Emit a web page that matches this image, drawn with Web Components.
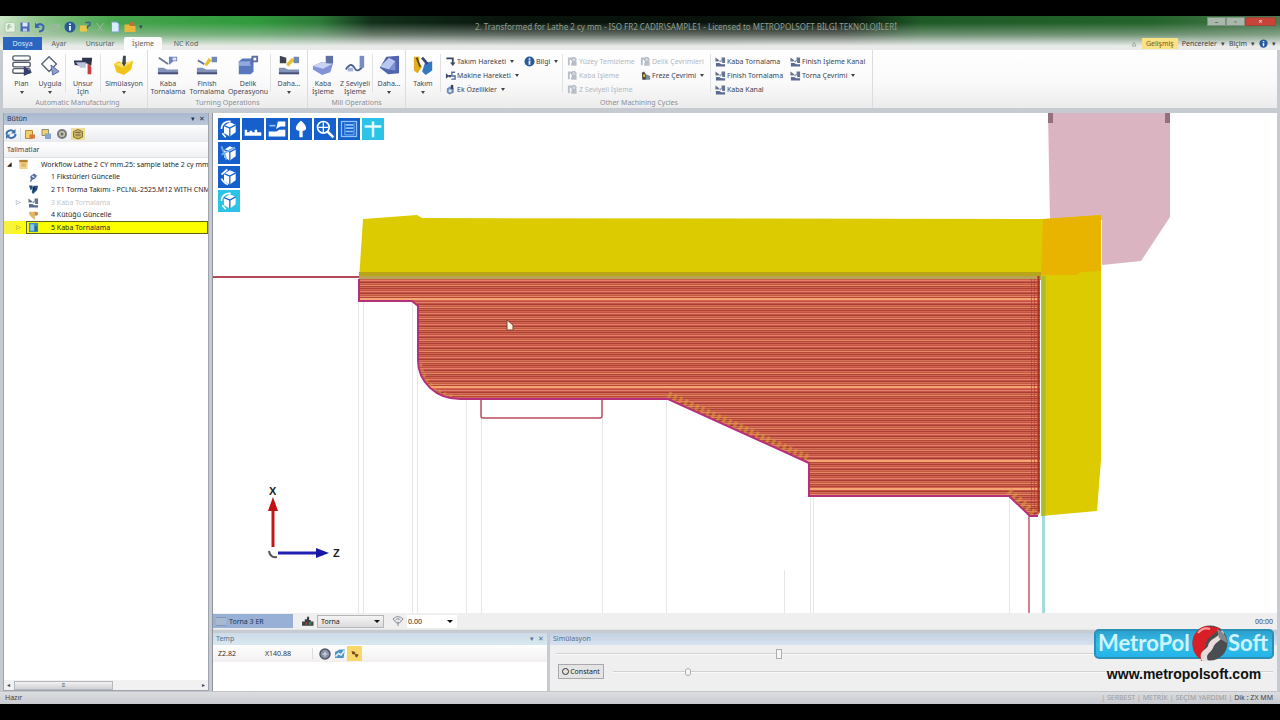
<!DOCTYPE html>
<html lang="tr">
<head>
<meta charset="utf-8">
<title>CAM - Torna</title>
<style>
html, body { height: 100%; margin: 0; background: #000; }
body { font: 7px/9px "Noto Sans", "Liberation Sans", sans-serif; color: #3c4450; }
</style>
</head>
<body>
<cam-app></cam-app>
<script>
const BASE = `:host{box-sizing:border-box} *{box-sizing:border-box} button{font:inherit;color:inherit;background:none;border:0;padding:0;margin:0;white-space:nowrap} `;
function define(name, css, html, setup) {
  const t = document.createElement('template');
  t.innerHTML = `<style>${BASE}${css}</style>${html}`;
  customElements.define(name, class extends HTMLElement {
    connectedCallback() {
      if (this.shadowRoot) return;
      const root = this.attachShadow({ mode: 'open' });
      root.append(t.content.cloneNode(true));
      if (setup) setup(this, root);
    }
  });
}

/* ---------- icons, all on a 24 x 24 grid ---------- */
const cube = '<path d="M6 8l7-4 7 3v9l-7 5-7-4z" fill="#fff"/><path d="M6 8l7 3 7-4M13 11v10" stroke="#1464c8" stroke-width="1.5" fill="none"/>';
const lathe = (top) => `<path d="M1 22v-7h6l4 2h12v5z" fill="#8292b8"/><path d="M1 20h22v2H1z" fill="#454f78"/>${top}`;
const holder = '<path d="M13 12V3h9v5h-4z" fill="#6f84bd"/><path d="M17 4h4v3h-4z" fill="#dfe5f4"/>';
const ICONS = {
  app: '<rect x="2" y="3" width="20" height="19" rx="3" fill="#e8f2e4" stroke="#8ab08a"/><path d="M8 17V8h5M8 12h7" stroke="#8ab08a" stroke-width="2" fill="none"/>',
  save: '<path d="M3 3h18v18H3z" fill="#4a6cb8"/><path d="M7 3h10v8H7z" fill="#dfe8f8"/><path d="M8 15h8v6H8z" fill="#c0cce6"/>',
  undo: '<path d="M5 10c6-7 15-3 14 4-1 5-5 7-9 7" stroke="#3d64b4" stroke-width="4" fill="none"/><path d="M2 3v11h10z" fill="#3d64b4"/>',
  redo: '<path d="M19 10C13 3 4 7 5 14c1 5 5 7 9 7" stroke="#9db4a8" stroke-width="3" fill="none"/><path d="M22 3v11H12z" fill="#9db4a8"/>',
  info: '<circle cx="12" cy="12" r="11" fill="#2a5a9c"/><path d="M10 10h4v9h-4zM10 5h4v3h-4z" fill="#e4f0ff"/>',
  help2: '<path d="M2 9h14v12H2z" fill="#eac64a"/><path d="M13 3h9v5l-5 3v4" stroke="#40618c" stroke-width="3" fill="none"/>',
  cut: '<path d="M5 4l12 16M19 4L7 20" stroke="#9eb3a6" stroke-width="2"/>',
  doc: '<path d="M5 2h11l4 4v16H5z" fill="#d8ecfc" stroke="#6e9dd0" stroke-width="2"/>',
  folder: '<path d="M1 7h9l2 3h11v12H1z" fill="#e8b83c"/><path d="M12 2h9v8h-9z" fill="#b97336"/>',
  plan: '<rect x="2" y="2" width="19" height="5" rx="2" fill="#fff" stroke="#59606c" stroke-width="1.5"/><rect x="2" y="9" width="19" height="5" rx="2" fill="#fff" stroke="#59606c" stroke-width="1.5"/><rect x="2" y="16" width="19" height="5" rx="2" fill="#fff" stroke="#59606c" stroke-width="1.5"/><path d="M14 13l9 7-9 4z" fill="#35416d"/>',
  apply: '<path d="M3 11l8-8 8 8-8 8z" fill="#fff" stroke="#596374" stroke-width="1.500"/><path d="M13 12l9 7-7 4z" fill="#8fa3cf" stroke="#52659a"/>',
  feature: '<path d="M2 7h9V4h11l-1 9-5-3-5 3-8-1z" fill="#2c344e"/><path d="M4 9l5 6h6V9z" fill="#bbc4de"/><path d="M17 10l4 4v8h-4z" fill="#cc3a42"/>',
  sim: '<path d="M1 11l5-3 7 3 9-4-2 10-8 6-8-3z" fill="#f0c419"/><path d="M1 11l10 4 11-7-10 1z" fill="#fae06b"/><path d="M11 2h3v8l-2 4-2-4z" fill="#404654"/>',
  rough: lathe('<path d="M2 4l10 7" stroke="#6b789c" stroke-width="2"/>' + holder),
  finish: lathe('<path d="M2 7l7 4" stroke="#6b789c" stroke-width="2"/><path d="M9 12l5-8 3 3-5 6z" fill="#e5c230"/><path d="M17 3h6v6h-6z" fill="#7387b8"/>'),
  drill: '<path d="M2 8l4-3h12v14l-3 3H2z" fill="#5777bf"/><path d="M2 8h13v5H2z" fill="#91a9df"/><path d="M15 8l3-3" stroke="#fff"/><path d="M16 2h7v7h-5l-4 3z" fill="#5d6ea3"/><path d="M18 4h3v3h-3z" fill="#fff"/>',
  more: lathe('<path d="M2 2l7 2v6H2z" fill="#3d4350"/><path d="M9 11l6-7 3 3-7 7z" fill="#e5c230"/><path d="M17 3h6v7h-6z" fill="#7387b8"/>'),
  mill: '<path d="M1 13l9-4 13 1-3 10-9 3-10-6z" fill="#8292d8"/><path d="M1 13l9-4 12 2-10 5z" fill="#cad3f5"/><path d="M15 2h8v8h-8z" fill="#5f719f"/>',
  mill2: '<path d="M2 17c5-8 8-5 10-1s7 1 9-4" stroke="#4e6392" stroke-width="2" fill="none"/><path d="M17 2h5v13h-5z" fill="#788cc0"/><path d="M4 15h6v4H4z" fill="#a5b5d9"/>',
  ball: '<path d="M9 3l14-1v19l-12 1-9-7z" fill="#5264ae"/><path d="M2 14L12 4l7 4-7 9z" fill="#b8c7f0"/><path d="M12 17l7-9v10z" fill="#7d92d4"/>',
  tool: '<path d="M2 3h6v7l3 4-5 7-4-3z" fill="#e3ad1e"/><path d="M5 4l4 10" stroke="#5d4a1c" stroke-width="2"/><path d="M14 10l8-2v10l-7 5-4-4z" fill="#3279c2"/><path d="M11 4l6 7" stroke="#384a72" stroke-width="3"/>',
  move: '<path d="M3 5h14v12" stroke="#3f4a61" stroke-width="4" fill="none"/><path d="M11 14h12l-6 8z" fill="#3f4a61"/>',
  machine: '<path d="M2 7l7 6-7 6zM8 11h5v5H8z" fill="#3a4968"/><path d="M22 5h-7v8h7v7h-8" stroke="#52679a" stroke-width="3" fill="none"/>',
  extra: '<path d="M4 10l8-5 7 4v10l-9 4-6-4z" fill="#718cb8"/><path d="M13 2h5v9h-5z" fill="#35445f"/><path d="M8 12h6v6H8z" fill="#dbe6f6"/>',
  ghost: '<path d="M2 3h9v5H6v12H2zM12 12h9v9H9v-5z" fill="#b9bfc9"/><circle cx="15" cy="8" r="5" fill="#d0d4dc" stroke="#a9b0bd" stroke-width="2"/>',
  cycle: '<path d="M4 6l5-3 4 7v11H5z" fill="#51493c"/><path d="M13 9l9 4v8h-9z" fill="#7a8ba6"/><path d="M7 9l4 1v5H7z" fill="#e0c240"/>',
  turn: '<path d="M1 3l9 7-3 2H1zM14 3h8v12h-6z" fill="#67728c"/><path d="M2 15h7l5 3h8v5H2z" fill="#5b6a92"/><path d="M10 13l6-5" stroke="#8a98ba" stroke-width="3"/>',
  refresh: '<path d="M3 13C3 5 12 2 18 7M21 12c0 7-9 11-15 5" stroke="#3f6fae" stroke-width="4" fill="none"/><path d="M21 2v9h-9zM2 22v-9h9z" fill="#3f6fae"/>',
  note: '<path d="M3 5h14v16H3z" fill="#f1cf6a" stroke="#b18c38" stroke-width="2"/><path d="M11 13h11v8H11z" fill="#d8793c"/>',
  sheet: '<path d="M4 3h13v12H4z" fill="#f1cf6a" stroke="#8b8f74" stroke-width="2"/><path d="M10 11h12v11H10z" fill="#87a3d2"/>',
  gear: '<circle cx="12" cy="12" r="8" fill="#d0c79d" stroke="#737987" stroke-width="4"/><circle cx="12" cy="12" r="3" fill="#646b7c"/>',
  chart: '<path d="M3 7l9-4 9 4v11l-9 4-9-4z" fill="#cbb25c" stroke="#857136" stroke-width="2"/><path d="M7 9h10M7 14h10" stroke="#6c6450" stroke-width="2"/>',
  flow: '<path d="M3 2h18v20H3z" fill="#f2d58c"/><path d="M3 2h18v5H3z" fill="#b07f2f"/><path d="M7 11h10M7 15h10" stroke="#d09b46" stroke-width="2"/>',
  pin: '<path d="M5 9l8-6 7 5-6 8-8 1z" fill="#566d98"/><path d="M9 9l5 3" stroke="#dce8fa" stroke-width="3"/><path d="M5 21l5-7" stroke="#566d98" stroke-width="3"/>',
  toolhead: '<path d="M2 3h8v6L6 14zM12 4h10l-2 9-9 9-3-4z" fill="#224e86"/><path d="M10 6l6 4-5 6z" fill="#0d2646"/>',
  stock: '<path d="M2 4h20v7l-7 2v9l-6-5-6-6z" fill="#e0b76a"/><path d="M14 3l8 5-5 5z" fill="#c07a40"/>',
  active: '<path d="M2 2h20v20H2z" fill="#3f8fbe"/><path d="M5 5h8v14H5z" fill="#93c9e4"/><path d="M15 9h5v11h-5z" fill="#2a6694"/>',
  chuck: '<path d="M2 20v-8h5V8h4V3h4v6h3v3h5v8z" fill="#3c4044"/><path d="M8 13h4v5H8z" fill="#a03c30"/><path d="M15 13h4v5h-4z" fill="#3e8f50"/>',
  wifi: '<path d="M2 8c6-6 14-6 20 0l-7 8h-6z" fill="none" stroke="#858b94" stroke-width="2"/><path d="M7 10c3-3 7-3 10 0M12 13v9" fill="none" stroke="#858b94" stroke-width="2"/>',
  target: '<circle cx="12" cy="12" r="10" fill="#8a91a6" stroke="#4e5568" stroke-width="3"/><path d="M7 12h10M12 7v10" stroke="#dde2ee" stroke-width="2"/>',
  axes: '<path d="M2 8l9-5h11l-3 17H2z" fill="#4d94c3"/><path d="M3 17l6-6 5 3 7-9" stroke="#e8f6ff" stroke-width="3" fill="none"/>',
  snap: '<path d="M4 5l9 2-2 7-6-2zM13 11l8 3-5 7-4-4z" fill="#7a4a20"/>',
  v1: cube + '<path d="M3 12c0-7 6-10 11-9M4 17l4 5" stroke="#fff" stroke-width="2" fill="none"/>',
  v2: '<path d="M2 20v-7h3v3h3v-2h3v2h3v-3h3v3h5v4z" fill="#fff"/>',
  v3: '<path d="M2 21v-6h9l4-2h7v8z" fill="#fff"/><path d="M13 3h9v6h-6l-5 3z" fill="#fff"/><path d="M3 8h7" stroke="#9cc6ff" stroke-width="2"/>',
  v4: '<path d="M12 2c3 2 7 7 6 10-1 2-3 2-4 2v8h-4v-8c-1 0-3 0-4-2-1-3 3-8 6-10z" fill="#fff"/>',
  v5: '<circle cx="10" cy="10" r="7" fill="none" stroke="#fff" stroke-width="2"/><path d="M15 15l7 7" stroke="#fff" stroke-width="3"/><path d="M10 4v12M4 10h12" stroke="#fff" stroke-width="1.5"/>',
  v6: '<rect x="3" y="3" width="18" height="18" fill="none" stroke="#8fc4ff" stroke-width="1.5"/><path d="M8 7h9M8 11h9M8 15h9" stroke="#8fc4ff" stroke-width="2"/><path d="M7 5v14h11V5" stroke="#8fc4ff" fill="none"/>',
  v7: '<path d="M12 3v19M2 9h20" stroke="#e4fbff" stroke-width="3"/>',
  v8: cube + '<path d="M3 4l6 16M3 14l16-9" stroke="#78acf0" stroke-width="2"/>',
  v9: cube + '<path d="M3 9l7-6M3 14c2 4 4 6 8 7" stroke="#fff" stroke-width="2" fill="none"/>',
  dot: '<path d="M6 18l6-11 6 11z" fill="none" stroke="#889888" stroke-width="2"/>'
};
customElements.define('ui-icon', class extends HTMLElement {
  connectedCallback() {
    if (this.shadowRoot) return;
    const s = this.getAttribute('size') || 12;
    this.attachShadow({ mode: 'open' }).innerHTML =
      `<style>:host{display:inline-flex;flex:none;vertical-align:middle}svg{display:block}</style>
       <svg width="${s}" height="${s}" viewBox="0 0 24 24" aria-hidden="true">${ICONS[this.getAttribute('name')] || ''}</svg>`;
  }
});

/* ---------- title and tabs ---------- */
define('title-bar', `
:host{display:flex;align-items:center;height:21px;padding:0 4px}
nav{display:flex;gap:3px;align-items:center}
h1{flex:1;margin:0;padding-left:332px;font-weight:400;font-size:8px;line-height:10px;color:#8f9f90;white-space:nowrap;overflow:hidden}
.win{display:flex;align-self:flex-start;margin-top:1px}
.win button{width:19px;height:9px;background:#a9b8aa;color:#3c463e;line-height:8px;border:1px solid #7f9182}
.win .x{width:31px;background:#c84438;color:#fff;border-color:#9c463c}`, `
<nav aria-label="Hızlı erişim">
<button aria-label="Uygulama"><ui-icon name="app"></ui-icon></button><button aria-label="Kaydet"><ui-icon name="save"></ui-icon></button>
<button aria-label="Geri al"><ui-icon name="undo"></ui-icon></button><button aria-label="Yinele"><ui-icon name="redo"></ui-icon></button>
<button aria-label="Bilgi"><ui-icon name="info"></ui-icon></button><button aria-label="Yardım"><ui-icon name="help2"></ui-icon></button>
<button aria-label="Kes"><ui-icon name="cut"></ui-icon></button><button aria-label="Yeni"><ui-icon name="doc"></ui-icon></button>
<button aria-label="Aç"><ui-icon name="folder"></ui-icon></button><span>▾</span></nav>
<h1>2. Transformed for Lathe 2 cy mm - ISO FR2 CADIR\\SAMPLE1 - Licensed to METROPOLSOFT BİLGİ TEKNOLOJİLERİ</h1>
<div class="win"><button aria-label="Küçült">–</button><button aria-label="Büyüt">▫</button><button class="x" aria-label="Kapat">×</button></div>`);

define('tab-bar', `
:host{display:flex;align-items:stretch;height:13px;padding:0 4px 0 3px}
button{display:flex;align-items:center;justify-content:center;width:42px;color:#5b625e}
.file{background:#2a66c0;color:#dbe8ff;width:39px}
.a{width:34px}.w{width:48px}.on{background:#fafbfa;width:38px;border-radius:2px 2px 0 0}
.r{display:flex;align-items:center;gap:4px;margin-left:auto}
.r button{width:auto;color:#444}
.r .hi{background:#fae184;height:11px;width:36px;color:#6d5a20}
.r .g{gap:4px}`, `
<button class="file">Dosya</button><button class="a">Ayar</button><button class="w">Unsurlar</button><button class="on">İşleme</button><button class="w">NC Kod</button>
<div class="r"><ui-icon name="dot" size="8"></ui-icon><button class="hi">Gelişmiş</button><button class="g">Pencereler <span>▾</span></button><button class="g">Biçim <span>▾</span></button><button class="g" aria-label="Yardım"><ui-icon name="info" size="9"></ui-icon><span>▾</span></button></div>`);

/* ---------- ribbon ---------- */
define('ribbon-group', `
:host{display:flex;flex-direction:column;border-right:1px solid #d9dce0;padding-top:4px}
.b{display:flex;flex:1}
.c{text-align:center;color:#8a8f98;height:11px;line-height:11px;font-size:7px}`,
`<div class="b"><slot></slot></div><div class="c"></div>`,
(h, r) => r.querySelector('.c').textContent = h.getAttribute('caption'));

define('big-button', `
:host{display:block;flex:none}
button{display:flex;flex-direction:column;align-items:center;width:100%;height:42px;line-height:8px;color:#444c58}
.l{white-space:pre;margin-top:4px;text-align:center}
.ic{display:flex}
i{width:0;height:0;border:2px solid transparent;border-top:3px solid #444;margin-top:3px}`,
`<button><span class="ic"></span><span class="l"></span></button>`,
(h, r) => {
  h.style.width = h.getAttribute('w') + 'px';
  r.querySelector('.ic').innerHTML = `<ui-icon size="22" name="${h.getAttribute('icon')}"></ui-icon>`;
  r.querySelector('.l').textContent = h.getAttribute('label').replace('|', '\n');
  if (h.hasAttribute('menu')) r.querySelector('button').append(document.createElement('i'));
});

define('small-button', `
:host{display:block}
button{display:flex;align-items:center;gap:1px;height:14px;color:#3c4450}
:host([off]) button{color:#b4b8bf}
i{width:0;height:0;border:2px solid transparent;border-top:3px solid #444;margin:2px 0 0 3px}`,
`<button><slot name="icon"></slot><span></span></button>`,
(h, r) => {
  h.insertAdjacentHTML('beforeend', `<ui-icon slot="icon" size="11" name="${h.getAttribute('icon')}"></ui-icon>`);
  r.querySelector('span').textContent = h.getAttribute('label');
  if (h.hasAttribute('menu')) r.querySelector('button').append(document.createElement('i'));
});

define('ribbon-bar', `
:host{display:flex;height:58px;padding-left:5px;margin:0 3px;background:linear-gradient(#fff,#fafafb 55%,#ececee)}
hr{width:1px;height:38px;border:0;margin:0;background:#dfe1e5;flex:none}
.s{margin-right:4px}
.col{display:flex;flex-direction:column}
.k1{width:79px}.k2{width:38px}.k3{width:73px}.k4{width:70px}.k5{width:75px}.k6{width:82px}`, `
<ribbon-group caption="Automatic Manufacturing">
<big-button w="27" icon="plan" label="Plan" menu></big-button><big-button w="30" icon="apply" label="Uygula" menu></big-button><hr>
<big-button w="34" icon="feature" label="Unsur|İçin"></big-button><hr><big-button w="46" icon="sim" label="Simülasyon" menu></big-button></ribbon-group>
<ribbon-group caption="Turning Operations">
<big-button w="40" icon="rough" label="Kaba|Tornalama"></big-button><big-button w="38" icon="finish" label="Finish|Tornalama"></big-button><big-button w="44" icon="drill" label="Delik|Operasyonu"></big-button><hr>
<big-button w="36" icon="more" label="Daha..." menu></big-button></ribbon-group>
<ribbon-group caption="Mill Operations">
<big-button w="30" icon="mill" label="Kaba|İşleme"></big-button><big-button w="34" icon="mill2" label="Z Seviyeli|İşleme"></big-button><hr>
<big-button w="32" icon="ball" label="Daha..." menu></big-button></ribbon-group>
<ribbon-group caption="Other Machining Cycles">
<big-button w="34" icon="tool" label="Takım" menu></big-button><hr class="s">
<div class="col k1"><small-button icon="move" label="Takım Hareketi" menu></small-button><small-button icon="machine" label="Makine Hareketi" menu></small-button><small-button icon="extra" label="Ek Özellikler" menu></small-button></div>
<div class="col k2"><small-button icon="info" label="Bilgi" menu></small-button></div><hr class="s">
<div class="col k3"><small-button off icon="ghost" label="Yüzey Temizleme"></small-button><small-button off icon="ghost" label="Kaba İşleme"></small-button><small-button off icon="ghost" label="Z Seviyeli İşleme"></small-button></div>
<div class="col k4"><small-button off icon="ghost" label="Delik Çevrimleri"></small-button><small-button icon="cycle" label="Freze Çevrimi" menu></small-button></div><hr class="s">
<div class="col k5"><small-button icon="turn" label="Kaba Tornalama"></small-button><small-button icon="turn" label="Finish Tornalama"></small-button><small-button icon="turn" label="Kaba Kanal"></small-button></div>
<div class="col k6"><small-button icon="turn" label="Finish İşleme Kanal"></small-button><small-button icon="turn" label="Torna Çevrimi" menu></small-button></div></ribbon-group>`);

/* ---------- left panel ---------- */
define('tree-item', `
:host{display:flex;align-items:center;overflow:hidden;white-space:nowrap;color:#24282e;min-height:0}
.t{width:22px;flex:none;color:#777;padding-left:12px;font-size:6px}
.m{display:flex;flex:1;align-items:center;gap:12px;min-width:0;height:100%;padding-left:1px;border:1px solid transparent}
:host([root]) .t{width:12px;padding-left:3px;color:#222}
:host([off]){color:#c4c7cc}
:host([on]){background:linear-gradient(90deg,#f6f04a,#ff0 25px)}
:host([on]) .m{border-color:#5f661c;background:#fbff00}`,
`<span class="t"></span><div class="m"><slot name="icon"></slot><span class="l"></span></div>`,
(h, r) => {
  h.insertAdjacentHTML('beforeend', `<ui-icon slot="icon" size="11" name="${h.getAttribute('icon')}"></ui-icon>`);
  r.querySelector('.l').textContent = h.getAttribute('label');
  r.querySelector('.t').textContent = h.getAttribute('mark') || '';
});
define('side-panel', `
:host{display:flex;flex-direction:column;width:206px;flex:none;background:#fff;border:1px solid #9ea4ae;border-top:0}
header{display:flex;justify-content:space-between;height:12px;line-height:12px;padding:0 3px;background:linear-gradient(#aab9d0,#b9c6da);color:#26344c}
.tb{display:flex;gap:3px;align-items:center;height:17px;background:linear-gradient(#fdfdfe,#e9ebef)}
.tb button{display:flex;padding:0 1px}
.tb .on{background:#ecdf9c}
.tb hr{width:1px;height:12px;margin:0;border:0;background:#d4d7dc}
.tb{gap:2px}
h2{margin:0;font-weight:400;font-size:7px;line-height:14px;padding:1px 3px 0;background:linear-gradient(#fff,#f0f1f4);border-bottom:1px solid #dde0e4}
.tree{display:grid;grid-template-rows:repeat(6,1fr);height:76px}
.sb{display:flex;align-items:center;height:10px;margin-top:auto;background:#f1f1f2;justify-content:space-between;padding:0 3px;font-size:6px}
.thumb{width:99px;height:9px;margin-right:auto;margin-left:4px;border:1px solid #b4b7bc;background:linear-gradient(#f2f2f3,#cfd0d3);text-align:center;line-height:7px}`, `
<header><span>Bütün</span><span>▾ &nbsp;✕</span></header>
<div class="tb"><button aria-label="Yenile"><ui-icon name="refresh"></ui-icon></button><hr><button aria-label="Not"><ui-icon name="note"></ui-icon></button><button aria-label="Sayfa"><ui-icon name="sheet"></ui-icon></button><button aria-label="Ayar"><ui-icon name="gear"></ui-icon></button><button class="on" aria-label="Grafik"><ui-icon name="chart"></ui-icon></button></div>
<h2>Talimatlar</h2>
<div class="tree">
<tree-item root mark="◢" icon="flow" label="Workflow Lathe 2 CY mm.25: sample lathe 2 cy mm"></tree-item>
<tree-item icon="pin" label="1 Fikstürleri Güncelle"></tree-item>
<tree-item icon="toolhead" label="2 T1 Torma Takımı - PCLNL-2525.M12 WITH CNM"></tree-item>
<tree-item off mark="▷" icon="turn" label="3 Kaba Tornalama"></tree-item>
<tree-item icon="stock" label="4 Kütüğü Güncelle"></tree-item>
<tree-item on mark="▷" icon="active" label="5 Kaba Tornalama"></tree-item></div>
<div class="sb"><span>◂</span><div class="thumb">≡</div><span>▸</span></div>`);

/* ---------- model view ---------- */
define('model-view', `
:host{display:block;position:relative;flex:1;min-height:0;background:#fff;overflow:hidden}
svg.scene{display:block;width:100%;height:100%}
.h,.v{position:absolute;left:5px;display:flex;gap:2px}
.h{top:5px}.v{top:29px;flex-direction:column}
button{display:flex;align-items:center;justify-content:center;width:22px;height:22px;background:#1560cc}
.c{background:#2cc4e6}`, `
<svg class="scene" viewBox="213 113 1064 500" preserveAspectRatio="xMinYMin slice" role="img" aria-label="Torna takım yolu">
<defs><clipPath id="cut"><path d="M359 279V301H412L418 306V360C418 382 436 399 460 399H668L809 463V496H1009L1030 516H1037L1040 512V279z"/></clipPath></defs>
<path d="M1048 113h122v104l-29 44-39 4v-45h-52z" fill="#dab4c1"/>
<path d="M1048 113h5v10h-5zM1165 113h5v10h-5z" fill="#96707f"/>
<g stroke="#e6e6e6" fill="none"><path d="M358.500 301V613M363.500 301V613M412.500 301V613M417.500 306V613M466.500 400V613M481.500 418V613M602.500 418V613M666.500 400V613M810.500 496V613M813.500 496V613M1009.500 497V613M784.500 570V613"/></g>
<path d="M359 280l4-61 54-4 5 3 623 1 56-4v245l-4 51-56 5V280z" fill="#dccb00"/>
<path d="M1043 219l58-4v56l-20 1-5 3h-35z" fill="#e8b400"/>
<path d="M359 272h682v4H359z" fill="#baa51a"/><path d="M359 276h682v4H359z" fill="#b7a258"/>
<g clip-path="url(#cut)"><path d="M359 279h682v240H359z" fill="#ca6048"/><g id="passes"></g>
<path d="M1031.500 279v240M1034.500 279v240" stroke="#b23d38" opacity=".6"/>
<path d="M418 364q4 26 34 35M668 395l141 64M1009 491l28 26" stroke="#d9a036" stroke-width="8" stroke-dasharray="3 3" opacity=".55" fill="none"/></g>
<path d="M1038.500 276V512" stroke="#a8341e" stroke-width="2"/>
<path d="M1043.500 276V516" stroke="#a9bd2c" stroke-width="4"/>
<path d="M1043.500 516V613" stroke="#a4dbdc" stroke-width="3"/><path d="M1029 516V613" stroke="#c3596f" stroke-width="1.500"/>
<path d="M213 277H359" stroke="#b5485a" stroke-width="2"/>
<path d="M359 279V301H412L418 306V360C418 382 436 399 460 399H668L809 463V496H1009L1030 516H1038" fill="none" stroke="#b5307c" stroke-width="2"/>
<path d="M481 400v16q0 2 2 2h117q2 0 2-2v-16" fill="#fff" stroke="#b94a5c" stroke-width="1.500"/>
<path d="M507 320v10h6v-5z" fill="#f8f4e0" stroke="#7a4a30"/>
<path d="M273 547V506" stroke="#c01818" stroke-width="3"/><path d="M268 511l5-14 5 14z" fill="#c01010"/>
<path d="M278 553h40" stroke="#2020b4" stroke-width="3"/><path d="M316 548l13 5-13 5z" fill="#1818a8"/>
<path d="M269 551q1 7 8 6" fill="none" stroke="#555" stroke-width="2"/>
<g font-family="Liberation Sans,sans-serif" font-size="11" font-weight="700" fill="#222"><text x="269" y="495">X</text><text x="333" y="557">Z</text></g>
</svg>
<div class="h"></div><div class="v"></div>`, (h, r) => {
  const rows = ['#e67f68', '#c4554a', '#ab3d30', '#d2705a', '#c4583e', '#e4886c', '#b54632', '#cd6856', '#ad4034', '#d4644e', '#c05444'];
  let s = '';
  for (let y = 280; y < 518; y++) s += `<path d="M359 ${y}h682v1H359z" fill="${rows[(y - 280) % 11]}"/>`;
  for (const y of [298, 386, 460, 488]) s += `<path d="M359 ${y}h682v2H359z" fill="#f5a672"/>`;
  r.querySelector('#passes').innerHTML = s;
  const b = (n, c) => `<button class="${c}" aria-label="Görünüm ${n}"><ui-icon name="v${n}" size="20"></ui-icon></button>`;
  r.querySelector('.h').innerHTML = [1, 2, 3, 4, 5, 6].map(n => b(n, '')).join('') + b(7, 'c');
  r.querySelector('.v').innerHTML = b(8, '') + b(9, '') + b(1, 'c');
});

/* ---------- bars under the view ---------- */
define('view-footer', `
:host{display:flex;align-items:center;height:17px;background:#efefef;border-bottom:1px solid #e2e4e8}
.tab{display:flex;align-items:center;gap:3px;width:80px;height:14px;padding-left:3px;background:#98b0d6;color:#20365c}
.tab i{width:10px;height:9px;border:1px solid #8295b4;border-width:1px 0;background:#a9bad0}
label{display:flex;position:relative;align-items:center;margin-left:8px;gap:3px}
select{appearance:none;font:inherit;color:#222;width:67px;height:13px;padding:0 3px;border:1px solid #b4b6ba;border-radius:0;background:linear-gradient(#f4f4f4,#dcdcde)}
label::after{content:"";position:absolute;right:4px;border:3px solid transparent;border-top:3px solid #111;border-bottom:0}
.n select{background:#fff;border-color:#fff;width:50px;padding:0}
.z{margin-left:auto;padding-right:4px}`, `
<button class="tab"><i></i>Torna 3 ER</button>
<label><ui-icon name="chuck" size="13"></ui-icon><select aria-label="Mod"><option>Torna</option></select></label>
<label class="n"><ui-icon name="wifi" size="12"></ui-icon><select aria-label="Tolerans"><option>0.00</option></select></label>
<span class="z">00:00</span>`);

define('coord-panel', `
:host{display:flex;flex-direction:column;width:334px;background:#fff}
header{display:flex;justify-content:space-between;height:12px;line-height:12px;padding:0 3px;background:linear-gradient(#cddbe8,#d8e8f0);color:#5b6f88}
div{display:flex;align-items:center;height:17px;padding-left:5px;background:linear-gradient(#fff,#f2eff0);color:#333}
span.v{width:47px}
hr{width:1px;height:11px;border:0;margin:0 4px 0 0;background:#dcdcdc}
button{display:flex;align-items:center;justify-content:center;width:15px;height:15px}
.on{background:#f8d868}`, `
<header><span>Temp</span><span>▾ &nbsp;✕</span></header>
<div><span class="v">Z2.82</span><span class="v">X140.88</span><hr><button aria-label="Hedef"><ui-icon name="target"></ui-icon></button><button aria-label="Eksen"><ui-icon name="axes"></ui-icon></button><button class="on" aria-label="Yakala"><ui-icon name="snap" size="10"></ui-icon></button></div>`);

define('sim-panel', `
:host{display:flex;flex:1;flex-direction:column;min-width:0;margin-left:3px;background:#efefef}
header{height:12px;line-height:12px;padding:0 3px;background:linear-gradient(#c4d1e2,#d6e2f0);color:#5b6f88}
input{appearance:none;display:block;width:100%;height:12px;margin:0;background:linear-gradient(transparent 5px,#d2d2d2 5px,#d2d2d2 6px,#fafafa 6px,#fafafa 7px,transparent 7px)}
input::-webkit-slider-thumb{appearance:none;width:6px;height:10px;background:#f6f6f6;border:1px solid #adadad}
.p{padding:3px 4px 0 6px}
.q{display:flex;align-items:center;gap:9px;padding:4px 4px 0 8px}
.q button{display:flex;align-items:center;justify-content:center;gap:1px;width:46px;height:15px;border:1px solid #a9a9ab;background:#e4e4e5;color:#222}
.q i{width:7px;height:7px;border:1px solid #333;border-radius:50%}
.q input{flex:1;min-width:0}
.q input::-webkit-slider-thumb{width:6px;height:8px;border-radius:3px}`, `
<header>Simülasyon</header>
<div class="p"><input type="range" aria-label="Konum" value="31"></div>
<div class="q"><button><i></i>Constant</button><input type="range" aria-label="Hız" value="11"></div>`);

define('status-bar', `
:host{display:flex;justify-content:space-between;height:13px;line-height:12px;padding:0 7px 0 5px;border-top:1px solid #c3c4c8;background:linear-gradient(#dcdde0,#c9cacf);color:#444}
.g{color:#9a9ca2}`, `<span>Hazır</span><span><span class="g">| SERBEST | METRİK | SEÇİM YARDIMI | </span>Dik : ZX MM</span>`);

define('brand-mark', `
:host{display:block;position:absolute;right:6px;bottom:22px;width:180px;text-align:center}
svg{display:block}
a{display:block;font:700 14px/16px "Liberation Sans",sans-serif;color:#111;text-decoration:none;margin-top:3px}`, `
<svg width="180" height="38" viewBox="0 0 180 38" role="img" aria-label="MetroPol Soft">
<defs><linearGradient id="g" x2="0" y2="1"><stop stop-color="#2a9ecb"/><stop offset=".5" stop-color="#35bdea"/><stop offset="1" stop-color="#22b3e8"/></linearGradient></defs>
<rect x="1" y="5" width="178" height="28" rx="4" fill="url(#g)" stroke="#2b8fb6" stroke-width="2"/>
<g font-family="Lato,Liberation Sans,sans-serif" font-weight="700" font-size="22" fill="#cdf4ff"><text x="4" y="26">MetroPol</text><text x="134" y="26">Soft</text></g>
<circle cx="116" cy="18" r="17.500" fill="#4b4e50"/><path d="M112 36C94 33 94 5 112 1l14 2c-4 6-14 9-14 16 0 6-6 6-5 17z" fill="#d81e26"/>
<path d="M108 36c-4-10 3-10 6-15 1-8 10-7 14-16l2 3c-2 9-9 8-11 15-3 6-8 5-5 13z" fill="#e9dcdc"/><path d="M123 4c7 3 10 8 10 14l-8-5z" fill="#85888b"/>
<path d="M104 8c4-5 9-5 12-4" stroke="#ff9a92" stroke-width="2" fill="none"/></svg>
<a href="#metropolsoft">www.metropolsoft.com</a>`);

/* ---------- page shell ---------- */
define('cam-app', `
:host{display:flex;min-height:100vh;padding:16px 0;background:#000}
.win{display:flex;flex:1;flex-direction:column;min-width:0;background:#c6cad1;position:relative}
.chrome{background:linear-gradient(180deg,rgba(235,238,235,0) 20%,rgba(190,198,190,.5) 55%,#e9ebe9 88%),linear-gradient(90deg,#cfe6cb 0,#8cc48a 3%,#46a44c 9%,#2f9a3c 20%,#2c7a38 25%,#12301a 29%,#08130c 40%,#0a130c 66%,#1e5a26 72%,#24632b 90%,#4b7a50 100%)}
main{display:flex;flex:1;min-height:0;margin-top:5px;padding:0 3px}
.right{display:flex;flex:1;flex-direction:column;min-width:0;margin-left:3px;border-left:1px solid #8e939c}
.low{display:flex;height:58px;margin-top:3px}`, `
<div class="win"><div class="chrome"><title-bar></title-bar><tab-bar></tab-bar></div>
<ribbon-bar></ribbon-bar>
<main><side-panel></side-panel><div class="right"><model-view></model-view><view-footer></view-footer><div class="low"><coord-panel></coord-panel><sim-panel></sim-panel></div></div></main>
<status-bar></status-bar><brand-mark></brand-mark></div>`);
</script>
</body>
</html>
